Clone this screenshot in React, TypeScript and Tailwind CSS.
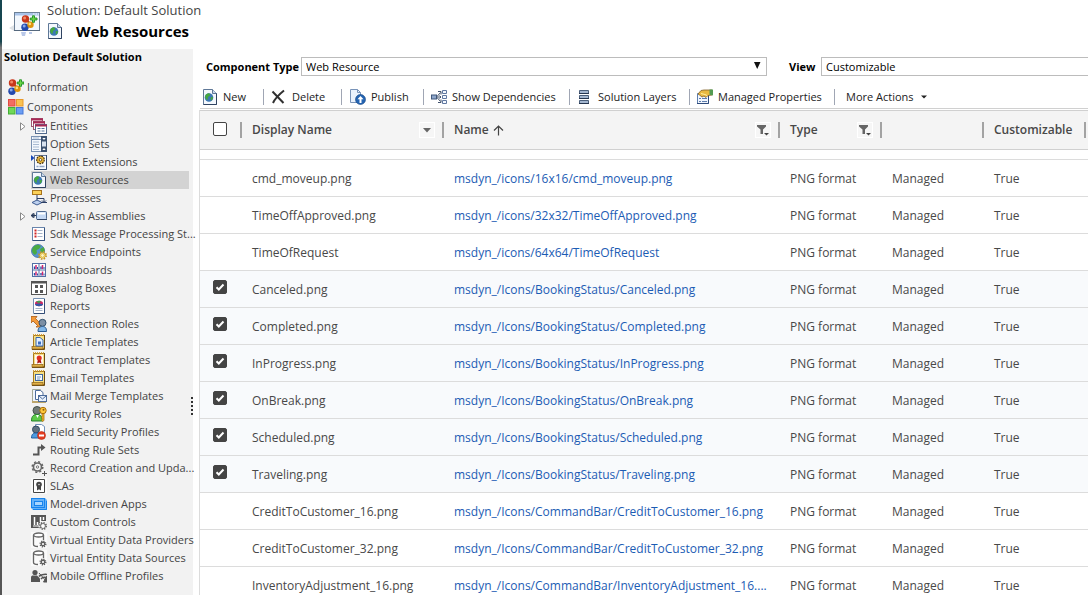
import React, { useState } from "react";

type IconProps = { children: React.ReactNode; size?: string };

function Icon({ children, size = "size-4" }: IconProps) {
  return (
    <svg viewBox="0 0 16 16" className={`${size} shrink-0`} aria-hidden="true">
      {children}
    </svg>
  );
}

function Gear({ x, y, r, color, hole }: { x: number; y: number; r: number; color: string; hole: string }) {
  return (
    <g>
      <circle cx={x} cy={y} r={r} fill="none" stroke={color} strokeWidth={r * 0.5} strokeDasharray={`${r * 0.42} ${r * 0.365}`} />
      <circle cx={x} cy={y} r={r * 0.85} fill={color} />
      <circle cx={x} cy={y} r={r * 0.4} fill={hole} />
    </g>
  );
}

const molecule = (
  <>
    <path d="M5 5l5 4M10 9.500L5 12.500" stroke="#a5601a" strokeWidth="2" />
    <circle cx="4.500" cy="4" r="3.700" fill="#c9371b" />
    <circle cx="3.600" cy="2.900" r="1.500" fill="#f08a68" />
    <circle cx="4" cy="12.200" r="3.700" fill="#2349ad" />
    <circle cx="3.200" cy="11" r="1.500" fill="#86a8ec" />
    <circle cx="9.500" cy="9.800" r="3.200" fill="#dd930c" />
    <circle cx="8.800" cy="8.900" r="1.300" fill="#ffdf78" />
    <path d="M11.500.8h2v2.200H16v2h-2.500v2.300h-2V5H9.300V3h2.200z" fill="#6cd648" stroke="#1f8f25" strokeWidth=".9" />
  </>
);

const globePage = (
  <>
    <path d="M1.500.5h9l4 4v11h-13z" fill="#f4f8fd" stroke="#5f7897" />
    <path d="M10.500.5v4h4" fill="#c9d8ea" stroke="#5f7897" />
    <path d="M14.500 4.500v11h-13" fill="none" stroke="#2f4361" />
    <circle cx="7" cy="8.500" r="4.300" fill="#3c78b4" />
    <path d="M3.200 7c1-2.300 2.500-3 4.300-2.700L8 6.500 6 8l-.5 3C4 10.500 3 9 3.200 7zM8.500 8.500l2.200-.8c.5 1.600-.4 3.200-1.700 4z" fill="#46a83e" />
  </>
);

function WindowIcon() {
  return (
    <svg viewBox="0 0 32 32" className="size-8 shrink-0" aria-hidden="true">
      <path d="M0 22l5-3v4h24v2H5z" fill="#dfe3e7" />
      <rect x="5.500" y="6.500" width="25" height="18" fill="#f2f7fd" stroke="#6d8197" />
      <rect x="6" y="7" width="24" height="2.500" fill="#a9c4ea" />
      <path d="M24 8h1.500M26.500 6h0M26.500 8H28M29 8h1" stroke="#fff" />
      <path d="M5 24.500h26" stroke="#56697e" />
      <g transform="translate(12 9)">{molecule}</g>
      <path d="M12 26h5l-1 4h-3zM20 26h3v2h-3z" fill="#b9c8e8" />
    </svg>
  );
}

const template = (
  <>
    <path d="M2.500 1.500h11v13h-11z" fill="#f7df83" stroke="#a9781d" />
    <path d="M13.500 1v14.500H1" fill="none" stroke="#6b4a12" />
    <path d="M2 .8h12" stroke="#d8a53b" strokeWidth="1.500" strokeDasharray="1 1" />
    <rect x="1" y="12.500" width="11" height="2.500" fill="#dfae45" stroke="#91661a" strokeWidth=".7" />
  </>
);

const dataStore = (
  <>
    <rect width="16" height="16" fill="#fafafa" />
    <ellipse cx="7.500" cy="3" rx="5" ry="2" fill="#fff" stroke="#666" strokeWidth="1.300" />
    <path d="M2.500 3v9.500c0 1.200 1.800 2 4.500 2M12.500 3v5" fill="none" stroke="#666" strokeWidth="1.300" />
    <Gear x={12} y={12} r={2.8} color="#5c5c5c" hole="#fff" />
  </>
);

const icons: Record<string, React.ReactNode> = {
  info: molecule,
  components: (
    <>
      <rect x=".5" y=".5" width="6.500" height="6.500" fill="#f26d62" stroke="#e04a42" />
      <rect x="8.500" y=".5" width="6.500" height="6.500" fill="#f9c252" stroke="#e9992a" />
      <rect x=".5" y="8.500" width="6.500" height="6.500" fill="#6fd858" stroke="#44ad35" />
      <rect x="8.500" y="8.500" width="6.500" height="6.500" fill="#6b9df3" stroke="#4477d6" />
    </>
  ),
  entities: (
    <>
      <rect x=".5" y=".5" width="11" height="8" fill="#fff" stroke="#9c5672" />
      <path d="M0 1.500h12" stroke="#a92855" strokeWidth="2" />
      <rect x="2.500" y="3.500" width="11" height="8" fill="#fff" stroke="#9c5672" />
      <path d="M2 4.500h12" stroke="#a92855" strokeWidth="2" />
      <rect x="4.500" y="6.500" width="11" height="9" fill="#fff" stroke="#526b8e" />
      <path d="M4 7.500h12" stroke="#a92855" strokeWidth="2" />
      <path d="M6.500 10.500h3m1 0h3m-7 2.500h3m1 0h3" stroke="#56749c" />
    </>
  ),
  optionSets: (
    <>
      <rect x=".5" y=".5" width="15" height="15" fill="#f4f8fd" stroke="#7b92b2" />
      <path d="M0 3.500h16" stroke="#7b92b2" />
      <path d="M2 2h6M2 6h6M2 8.500h6M2 11h6M2 13.500h6" stroke="#a9bbd2" />
      <rect x="10" y="0" width="6" height="16" fill="#3c5271" />
      <rect x="11" y="5.500" width="4" height="5" fill="#d7e2f0" />
      <path d="M11.300 2h3.400L13 4zM11.300 14h3.400L13 12z" fill="#fff" />
    </>
  ),
  client: (
    <>
      <path d="M3.500 1.500h12v14h-12z" fill="#f8fbff" stroke="#64799b" />
      <path d="M15.500 1v14.500H3" fill="none" stroke="#344a70" />
      <path d="M0 1l3.500 3L0 7z" fill="#1747b8" />
      <circle cx="9.500" cy="5.800" r="3.800" fill="#e8b83e" stroke="#4a3410" strokeWidth="1.200" strokeDasharray="1.800 .8" />
      <circle cx="9.500" cy="5.800" r="1.300" fill="#fff" stroke="#73521b" />
      <path d="M5.500 12.500h2m1 0h5" stroke="#8da2c3" strokeWidth="1.500" />
    </>
  ),
  web: globePage,
  processes: (
    <>
      <rect x="1.500" y=".5" width="9" height="4" fill="#fbd159" stroke="#a8741d" />
      <path d="M6 5v6M6 8.500h7v4" fill="none" stroke="#2b3e66" />
      <path d="M1 12.500L6 10l5 2.500L6 15z" fill="#bdd0ee" stroke="#3e5c91" />
      <path d="M10 12.500h6M11 10.500l2 2 2-2" fill="none" stroke="#2b3e66" />
    </>
  ),
  plugin: (
    <>
      <path d="M0 7.500h6" stroke="#283a59" />
      <path d="M0 7.500L2.500 5v5zM3.500 5.500v4" fill="#283a59" stroke="#283a59" strokeWidth=".6" />
      <rect x="5.500" y="3.500" width="10" height="8" rx="1" fill="#c5d9f4" stroke="#4f6a90" />
      <path d="M7 5.500h7" stroke="#fff" strokeWidth="2" />
      <path d="M6 11.500h10" stroke="#2f4465" />
    </>
  ),
  sdk: (
    <>
      <rect x="1.500" y="1.500" width="12" height="13" fill="#fff" stroke="#6884ab" />
      <path d="M13.500 2v12.500H2" fill="none" stroke="#37537f" />
      <path d="M3.500 4.500h2M3.500 7.500h2M3.500 10.500h2" stroke="#d02525" strokeWidth="2" />
      <path d="M6.500 4.500h5M6.500 7.500h5M6.500 10.500h5" stroke="#a4b2c8" />
    </>
  ),
  service: (
    <>
      <circle cx="7" cy="7" r="6.500" fill="#5793cf" stroke="#31639e" strokeWidth=".7" />
      <path d="M1 6c.5-3 2.500-5 6-5.300L10 2 8 5 5.500 6 6 9l-2 2C2 10 1 8 1 6zM9 5l3.500-2c1.300 2 1.300 4 .5 6l-3-1z" fill="#49ab42" />
      <Gear x={11.5} y={11.5} r={3.6} color="#c99a25" hole="#fff6c8" />
      <circle cx="11.500" cy="11.500" r="2.200" fill="none" stroke="#f5dc7a" />
    </>
  ),
  dashboards: (
    <>
      <rect x="1" y="1" width="14" height="14" fill="#526fa5" />
      <path d="M2 2h5.500v5.500H2zM8.500 2H14v5.500H8.500zM2 8.500h5.500V14H2zM8.500 8.500H14V14H8.500z" fill="#fff" />
      <path d="M3.500 7V4.500M10 7V4.500M3.500 13.500V11M10 13.500V11" stroke="#244fac" strokeWidth="1.400" />
      <path d="M5 7V3M11.500 7V3M5 13.500v-4M11.500 13.500v-4" stroke="#cf266d" strokeWidth="1.500" />
      <path d="M6.500 7V5M13 7V5M6.500 13.500v-2M13 13.500v-2" stroke="#244fac" />
    </>
  ),
  dialog: (
    <>
      <rect x=".5" y="1.500" width="15" height="13" fill="#fff" stroke="#555" />
      <path d="M0 2.500h16" stroke="#555" strokeWidth="2" />
      <path d="M4 5h3v3H4zM9 5h3v3H9zM4 10h3v3H4zM9 10h3v3H9z" fill="#555" />
    </>
  ),
  reports: (
    <>
      <path d="M2.500.5h11v15h-11z" fill="#fff" stroke="#7690b2" />
      <path d="M13.500 1v14.500H3" fill="none" stroke="#354e77" />
      <ellipse cx="8" cy="5.500" rx="4" ry="2.700" fill="#d32660" />
      <path d="M8 5.500L5 3.500C6.500 2.500 9 2.600 10 3z" fill="#48a050" />
      <path d="M4 6c0 3 8 3 8 0L8 5.500z" fill="#3458a8" />
      <path d="M4.500 10.500h7M4.500 12.500h7" stroke="#a6b3c8" />
    </>
  ),
  connection: (
    <>
      <path d="M0 .5h6L4.500 2.500 9 7l2-2v6H5l1.500-1.500L2 5 0 7z" fill="#f39a3b" stroke="#a85a17" strokeWidth=".8" />
      <circle cx="11.500" cy="6.800" r="3.500" fill="#7b8ea4" stroke="#33516e" />
      <path d="M7 15.500c0-4 2-5 4.500-5s4 1 4 5z" fill="#82b7e8" stroke="#2a5c95" />
    </>
  ),
  article: (
    <>
      {template}
      <path d="M5 3.500h4L12 6v6H5z" fill="#e1eeff" stroke="#3767ac" />
      <path d="M7 7.500h3v3H7z" fill="#3c6ec0" />
    </>
  ),
  contract: (
    <>
      {template}
      <rect x="4" y="3" width="8" height="9" fill="#fff8ec" />
      <path d="M7 7h2.500l1 4.500-2.200-1-2.200 1z" fill="#ab1414" />
      <circle cx="8.200" cy="6" r="2.500" fill="#e02e20" />
    </>
  ),
  email: (
    <>
      {template}
      <rect x="4.500" y="4.500" width="7" height="6" fill="#f8fcff" stroke="#3f67a0" />
      <path d="M6 7h4M6 9h3" stroke="#7593bf" />
    </>
  ),
  mail: (
    <>
      <path d="M1.500 1.500h8v12h-8z" fill="#f0f5fc" stroke="#a4a996" />
      <path d="M1 14h14" stroke="#bca66c" strokeWidth="2" />
      <path d="M4.500 2.500h5l2.500 2v7H4.500z" fill="#fff" stroke="#4d6c9b" />
      <rect x="7.500" y="7.500" width="8" height="6" fill="#e8f1fd" stroke="#4d6c9b" />
      <path d="M8 8l3.500 3L15 8" fill="none" stroke="#4d6c9b" />
    </>
  ),
  security: (
    <>
      <circle cx="6" cy="4.500" r="4" fill="#707a76" stroke="#43504a" />
      <path d="M.5 15C.5 9.500 3 8.500 6 8.500s5 1 5.500 6.500z" fill="#5cca48" stroke="#23802a" />
      <path d="M5 9l1.500 3L8 9z" fill="#fff" />
      <path d="M11 6l2 1v7.500l-1.500 1-1-1.500 1-1-1-1 .5-1z" fill="#f6bd29" stroke="#976311" strokeWidth=".7" />
      <circle cx="12" cy="4.500" r="3.200" fill="#ffc93b" stroke="#a66c0c" />
      <circle cx="12.500" cy="3.800" r="1" fill="#8b5b10" />
    </>
  ),
  field: (
    <>
      <path d="M4.500.5h6l3 2v11h-9z" fill="#fff" stroke="#7090ba" />
      <circle cx="5" cy="5.500" r="3.500" fill="#5f7080" stroke="#304b66" />
      <path d="M.5 14c0-4 2-5 4.500-5s4.500 1 4.500 5z" fill="#4c9be0" stroke="#215e9e" />
      <circle cx="10.500" cy="11.500" r="4" fill="#e53c22" stroke="#b22913" strokeWidth=".6" />
      <path d="M8 11.500h5" stroke="#fff" strokeWidth="2" />
    </>
  ),
  routing: (
    <>
      <path d="M2 12.500h5.500V5.500H11" fill="none" stroke="#555" strokeWidth="2" />
      <path d="M10 2l4.500 3.500L10 9z" fill="#555" />
    </>
  ),
  record: (
    <>
      <circle cx="6.500" cy="7" r="5.300" fill="none" stroke="#666" strokeWidth="1.500" strokeDasharray="2.080 2.080" />
      <circle cx="6.500" cy="7" r="4" fill="#f2f2f2" stroke="#666" strokeWidth="1.600" />
      <circle cx="6.500" cy="7" r="1.200" fill="none" stroke="#777" />
      <path d="M11 13.500h5M13.500 11v5" stroke="#555" />
    </>
  ),
  sla: (
    <>
      <path d="M0 0h16v16H0z" fill="#fafafa" />
      <path d="M2.500 1.500h11v13h-11z" fill="#fff" stroke="#454545" />
      <circle cx="8" cy="6.500" r="2.800" fill="#454545" />
      <path d="M6 8h4v4.500L8 11.300l-2 1.200z" fill="#454545" />
      <circle cx="8" cy="6.500" r=".8" fill="#ddd" />
    </>
  ),
  model: (
    <>
      <path d="M0 2h14l2 2v10H2l-2-2z" fill="#65b1f8" />
      <rect x=".5" y="2.500" width="13" height="9" fill="none" stroke="#1683ed" />
      <rect x="3.500" y="5.500" width="8" height="4" fill="#a8d5ff" stroke="#1683ed" />
      <path d="M2 13.500h13.500V5" fill="none" stroke="#1683ed" />
    </>
  ),
  custom: (
    <>
      <path d="M0 1h15v6H9v7H0z" fill="#555" />
      <path d="M3.500 3v8M6.500 8v3M9.500 3v5M12.500 3v3" stroke="#fff" strokeWidth="1.500" />
      <path d="M2 12h6" stroke="#fff" />
      <circle cx="12" cy="12" r="4.500" fill="#f2f2f2" />
      <Gear x={12} y={12} r={3.2} color="#666" hole="#fff" />
      <circle cx="12" cy="12" r="1.900" fill="#fff" />
    </>
  ),
  data: dataStore,
  mobile: (
    <>
      <circle cx="4" cy="4.500" r="2.600" fill="#555" />
      <path d="M0 14V9.500C0 8 1 7.500 2 7.500h4l3 3v3.500z" fill="#555" />
      <path d="M8 8.500c1-1.500 5-2.500 8-2M10 11c1-1.300 3-2 5-1.500" fill="none" stroke="#555" strokeWidth="1.500" />
      <path d="M8 5l8 9M12.500 14L16 8v6z" stroke="#555" fill="#555" />
    </>
  ),
  del: <path d="M1.500 2.500l11 11.500M13 1.500C8 5.500 4 9.500 2 14" fill="none" stroke="#303030" strokeWidth="2" />,
  publish: (
    <>
      <path d="M.5.500h7l3 3v10H.5z" fill="#e9f2fd" stroke="#7893b8" />
      <path d="M7.500.5v3h3" fill="none" stroke="#7893b8" />
      <circle cx="10.500" cy="10.500" r="5" fill="#2464b2" stroke="#174783" strokeWidth=".6" />
      <path d="M10.500 7l3 3.200h-2V14h-2v-3.800h-2z" fill="#fff" />
    </>
  ),
  dependencies: (
    <>
      <rect x=".5" y="6" width="5" height="4" fill="#8ea7cb" stroke="#41587d" />
      <path d="M5.500 8H10M6 7.500L9.500 3.500M6 8.500l3.500 4M7 2.500h3v3M7 13.500h3v-3M8.500 6.500L10 8 8.500 9.500" fill="none" stroke="#43536d" />
      <path d="M11.500 1.500h4v3h-4zM11.500 6.500h4v3h-4zM11.500 11.500h4v3h-4z" fill="#f5f9ff" stroke="#6078a0" />
    </>
  ),
  layers: (
    <>
      <path d="M2.500 1.500h9v3h-9zM2.500 6.500h9v3h-9zM2.500 11.500h9v3h-9z" fill="#a3b6cf" stroke="#4c607c" />
      <path d="M2 4.500h10M2 9.500h10M2 14.500h10" stroke="#25364f" />
    </>
  ),
  managed: (
    <>
      <path d="M.5 4.500h11v10H.5z" fill="#f1f6fd" stroke="#5d7dad" />
      <path d="M11.500 5v9.500H0" fill="none" stroke="#2f4c7c" />
      <path d="M2 9.500h2m1 0h5M2 12.500h2m1 0h5" stroke="#5d7dad" />
      <path d="M1 5l3-3.500L7 1h8v5l-4 .5-2 2-2-1.500-2 1L2.500 6z" fill="#e9b940" stroke="#805d23" strokeWidth=".8" />
      <path d="M12.500.6H16v5.900l-3.500-.7z" fill="#539b52" />
      <path d="M4 4.500l4 1 2 1" stroke="#fff0a1" fill="none" />
    </>
  ),
};

type TreeItem = { label: string; icon: string; expandable?: boolean; selected?: boolean };

const tree: TreeItem[] = [
  { label: "Entities", icon: "entities", expandable: true },
  { label: "Option Sets", icon: "optionSets" },
  { label: "Client Extensions", icon: "client" },
  { label: "Web Resources", icon: "web", selected: true },
  { label: "Processes", icon: "processes" },
  { label: "Plug-in Assemblies", icon: "plugin", expandable: true },
  { label: "Sdk Message Processing St...", icon: "sdk" },
  { label: "Service Endpoints", icon: "service" },
  { label: "Dashboards", icon: "dashboards" },
  { label: "Dialog Boxes", icon: "dialog" },
  { label: "Reports", icon: "reports" },
  { label: "Connection Roles", icon: "connection" },
  { label: "Article Templates", icon: "article" },
  { label: "Contract Templates", icon: "contract" },
  { label: "Email Templates", icon: "email" },
  { label: "Mail Merge Templates", icon: "mail" },
  { label: "Security Roles", icon: "security" },
  { label: "Field Security Profiles", icon: "field" },
  { label: "Routing Rule Sets", icon: "routing" },
  { label: "Record Creation and Upda...", icon: "record" },
  { label: "SLAs", icon: "sla" },
  { label: "Model-driven Apps", icon: "model" },
  { label: "Custom Controls", icon: "custom" },
  { label: "Virtual Entity Data Providers", icon: "data" },
  { label: "Virtual Entity Data Sources", icon: "data" },
  { label: "Mobile Offline Profiles", icon: "mobile" },
];

type Resource = { display: string; name: string; checked?: boolean };

const resources: Resource[] = [
  { display: "cmd_moveup.png", name: "msdyn_/icons/16x16/cmd_moveup.png" },
  { display: "TimeOffApproved.png", name: "msdyn_/icons/32x32/TimeOffApproved.png" },
  { display: "TimeOfRequest", name: "msdyn_/icons/64x64/TimeOfRequest" },
  { display: "Canceled.png", name: "msdyn_/Icons/BookingStatus/Canceled.png", checked: true },
  { display: "Completed.png", name: "msdyn_/Icons/BookingStatus/Completed.png", checked: true },
  { display: "InProgress.png", name: "msdyn_/Icons/BookingStatus/InProgress.png", checked: true },
  { display: "OnBreak.png", name: "msdyn_/Icons/BookingStatus/OnBreak.png", checked: true },
  { display: "Scheduled.png", name: "msdyn_/Icons/BookingStatus/Scheduled.png", checked: true },
  { display: "Traveling.png", name: "msdyn_/Icons/BookingStatus/Traveling.png", checked: true },
  { display: "CreditToCustomer_16.png", name: "msdyn_/Icons/CommandBar/CreditToCustomer_16.png" },
  { display: "CreditToCustomer_32.png", name: "msdyn_/Icons/CommandBar/CreditToCustomer_32.png" },
  { display: "InventoryAdjustment_16.png", name: "msdyn_/Icons/CommandBar/InventoryAdjustment_16...." },
];

const commands = [
  { label: "New", icon: "web", box: "w-[63px] pl-[2px]" },
  { label: "Delete", icon: "del", box: "w-[78px] border-l pl-[7px]" },
  { label: "Publish", icon: "publish", box: "w-[82px] border-l pl-2" },
  { label: "Show Dependencies", icon: "dependencies", box: "w-[146px] border-l pl-[7px]" },
  { label: "Solution Layers", icon: "layers", box: "w-[120px] border-l pl-[7px]" },
  { label: "Managed Properties", icon: "managed", box: "w-[145px] border-l pl-[7px]" },
];

function Sidebar() {
  return (
    <nav aria-label="Solution" className="flex w-[191px] shrink-0 bg-[#f2f2f2] text-[11px] text-[#444]">
      <div className="min-w-0 flex-1">
        <h2 className="h-7 whitespace-nowrap pl-[2px] text-[11px] leading-4 font-bold text-black">
          Solution Default Solution
        </h2>
        <a href="#information" className="flex h-5 items-center gap-[3px] pl-[6px]">
          <Icon>{icons.info}</Icon>
          Information
        </a>
        <a href="#components" className="flex h-5 items-center gap-[3px] pl-[6px]">
          <Icon>{icons.components}</Icon>
          Components
        </a>
        <ul>
          {tree.map((item) => (
            <li key={item.label} className="flex h-[18px] items-center">
              <span className="flex w-[29px] shrink-0 justify-end pr-[5px]">
                {item.expandable && (
                  <svg viewBox="0 0 6 9" className="h-[9px] w-[6px]" aria-hidden="true">
                    <path d="M.5.800L5 4.500.5 8.200z" fill="#fff" stroke="#8a8a8a" />
                  </svg>
                )}
              </span>
              <a
                href="#component"
                className={`flex h-full w-[158px] items-center gap-[3px] whitespace-nowrap ${item.selected ? "bg-[#d3d3d3]" : ""}`}
              >
                <Icon>{icons[item.icon]}</Icon>
                {item.label}
              </a>
            </li>
          ))}
        </ul>
      </div>
      <svg viewBox="0 0 2 18" className="mt-[348px] h-[18px] w-[2px] shrink-0" aria-hidden="true">
        <path d="M1 0v18" stroke="#333" strokeWidth="2" strokeDasharray="2 2" />
      </svg>
    </nav>
  );
}

function Check({ checked, label, onChange }: { checked: boolean; label: string; onChange: () => void }) {
  return (
    <span className="grid size-[14px] place-items-center">
      <input
        type="checkbox"
        aria-label={label}
        checked={checked}
        onChange={onChange}
        className="col-start-1 row-start-1 size-[14px] appearance-none rounded-[2px] border border-[#444] bg-white checked:bg-[#444]"
      />
      {checked && (
        <svg viewBox="0 0 14 14" className="pointer-events-none col-start-1 row-start-1 size-[14px]" aria-hidden="true">
          <path d="M3.500 7.200l2.300 2.300 4.700-5" fill="none" stroke="#fff" strokeWidth="2" />
        </svg>
      )}
    </span>
  );
}

function FilterButton({ label }: { label: string }) {
  return (
    <button type="button" aria-label={label} className="flex size-4 items-center justify-center border border-white bg-[#f6f6f6]">
      <svg viewBox="0 0 14 14" className="size-[14px] shrink-0" aria-hidden="true">
        <path d="M1 2h9v1.500L7 6.500V11H4.500V6.500L1 3.500z" fill="#666" />
        <path d="M8 10h5l-2.500 2.500z" fill="#444" />
      </svg>
    </button>
  );
}

function HeaderCell({ title, tools, arrow }: { title?: string; tools?: React.ReactNode; arrow?: boolean }) {
  return (
    <th scope="col" className="h-[39px] p-0 text-left font-semibold">
      <div className="flex items-center border-r-2 border-[#a3a3a3] pl-[10px]">
        <span className="flex h-4 flex-1 items-center gap-1 whitespace-nowrap">
          {title}
          {arrow && (
            <svg viewBox="0 0 11 11" className="size-[11px]" aria-hidden="true">
              <path d="M5.500 10.500V1M1 5.500L5.500 1 10 5.500" fill="none" stroke="#444" strokeWidth="1.200" />
            </svg>
          )}
        </span>
        {tools && <span className="flex pr-[7px]">{tools}</span>}
      </div>
    </th>
  );
}

function ResourceTable() {
  const [selected, setSelected] = useState(() => resources.map((r) => Boolean(r.checked)));
  const all = selected.every(Boolean);
  const toggle = (index: number) => setSelected((prev) => prev.map((v, i) => (i === index ? !v : v)));

  return (
    <table className="w-full table-fixed border-collapse text-xs text-[#484848]">
      <colgroup>
        <col className="w-[42px]" />
        <col className="w-[202px]" />
        <col className="w-[336px]" />
        <col className="w-[102px]" />
        <col className="w-[102px]" />
        <col className="w-[102px]" />
        <col />
      </colgroup>
      <thead>
        <tr className="border-y border-[#d0d0d0] bg-[#f4f4f4]">
          <th scope="col" className="p-0">
            <div className="flex h-4 items-center border-r-2 border-[#a3a3a3] pb-[2px] pl-[13px]">
              <Check checked={all} label="Select all" onChange={() => setSelected(resources.map(() => !all))} />
            </div>
          </th>
          <HeaderCell
            title="Display Name"
            tools={
              <button type="button" aria-label="Display Name options" className="flex size-4 items-center justify-center border border-white bg-[#f6f6f6]">
                <svg viewBox="0 0 8 5" className="h-[5px] w-2" aria-hidden="true">
                  <path d="M0 0h8L4 4.500z" fill="#666" />
                </svg>
              </button>
            }
          />
          <HeaderCell title="Name" arrow tools={<FilterButton label="Filter by name" />} />
          <HeaderCell title="Type" tools={<FilterButton label="Filter by type" />} />
          <HeaderCell />
          <HeaderCell title="Customizable" />
          <td />
        </tr>
      </thead>
      <tbody>
        <tr className="h-[10px] border-b border-[#dcdcdc]" aria-hidden="true">
          <td colSpan={7} className="p-0" />
        </tr>
        {resources.map((r, i) => (
          <tr key={r.name} className={`h-[37px] border-b border-[#dcdcdc] ${selected[i] ? "bg-[#f8fafc]" : "bg-white"}`}>
            <td className="p-0 pb-1 pl-[13px]">
              {selected[i] && <Check checked label={`Select ${r.display}`} onChange={() => toggle(i)} />}
            </td>
            <td className="p-0 pt-[2px] pl-[10px] whitespace-nowrap">{r.display}</td>
            <td className="p-0 pt-[2px] pl-[10px] whitespace-nowrap">
              <a href="#resource" className="text-[#1c5cb4]">
                {r.name}
              </a>
            </td>
            <td className="p-0 pt-[2px] pl-[10px] whitespace-nowrap">PNG format</td>
            <td className="p-0 pt-[2px] pl-[10px] whitespace-nowrap">Managed</td>
            <td className="p-0 pt-[2px] pl-[10px] whitespace-nowrap">True</td>
            <td className="p-0" />
          </tr>
        ))}
      </tbody>
    </table>
  );
}

export default function App() {
  return (
    <div className="flex h-screen overflow-hidden bg-white font-['Open_Sans','Noto_Sans',sans-serif]">
      <div className="w-[2px] shrink-0 bg-linear-to-b from-[#164650] from-7% via-[#777] via-8% to-[#555]" />
      <div className="flex min-w-0 flex-1 flex-col">
        <header className="flex h-[49px] shrink-0">
          <div className="w-[45px] pt-[6px] pl-[7px]">
            <WindowIcon />
          </div>
          <div className="whitespace-nowrap">
            <p className="h-5 text-[13px] leading-5 text-[#444]">Solution: Default Solution</p>
            <div className="flex h-[22px] items-center gap-[13px]">
              <Icon>{globePage}</Icon>
              <h1 className="text-[15px] leading-5 font-bold text-black">Web Resources</h1>
            </div>
          </div>
        </header>
        <div className="flex min-h-0 flex-1">
          <Sidebar />
          <main className="ml-[6px] flex min-w-0 flex-1 flex-col">
            <div className="mt-2 flex h-[19px] shrink-0 items-center pl-[7px] text-[11px] text-black">
              <label htmlFor="component-type" className="w-[95px] shrink-0 pt-px font-bold whitespace-nowrap">
                Component Type
              </label>
              <div className="grid w-[466px] shrink-0 items-center">
                <select
                  id="component-type"
                  className="col-start-1 row-start-1 h-[19px] appearance-none border border-[#bcbcbc] bg-white pt-px pl-1"
                >
                  <option>Web Resource</option>
                </select>
                <svg
                  viewBox="0 0 8 8"
                  className="pointer-events-none col-start-1 row-start-1 mr-[6px] mb-[3px] size-2 justify-self-end"
                  aria-hidden="true"
                >
                  <path d="M1 1h6.500L4.200 8z" fill="#111" />
                </svg>
              </div>
              <label htmlFor="view" className="ml-[22px] w-8 shrink-0 pt-px font-bold">
                View
              </label>
              <select id="view" className="h-[19px] min-w-0 flex-1 appearance-none border border-r-0 border-[#bcbcbc] bg-white pt-px pl-1">
                <option>Customizable</option>
              </select>
            </div>
            <div role="toolbar" className="mt-[11px] ml-px flex h-[22px] shrink-0 items-start border-b border-[#d0d0d0] pt-[2px] text-[11px] text-[#222]">
              {commands.map((c) => (
                <button
                  key={c.label}
                  type="button"
                  className={`flex h-4 shrink-0 items-center gap-[5px] border-[#a0a6b4] whitespace-nowrap ${c.box}`}
                >
                  <Icon>{icons[c.icon]}</Icon>
                  {c.label}
                </button>
              ))}
              <button type="button" className="flex h-4 items-center gap-[7px] border-l border-[#a0a6b4] pl-[11px] whitespace-nowrap">
                More Actions
                <svg viewBox="0 0 6 4" className="h-1 w-[6px]" aria-hidden="true">
                  <path d="M0 .5h6L3 3.500z" fill="#222" />
                </svg>
              </button>
            </div>
            <div className="mt-px border-l border-[#dcdcdc]">
              <ResourceTable />
            </div>
          </main>
        </div>
      </div>
    </div>
  );
}
